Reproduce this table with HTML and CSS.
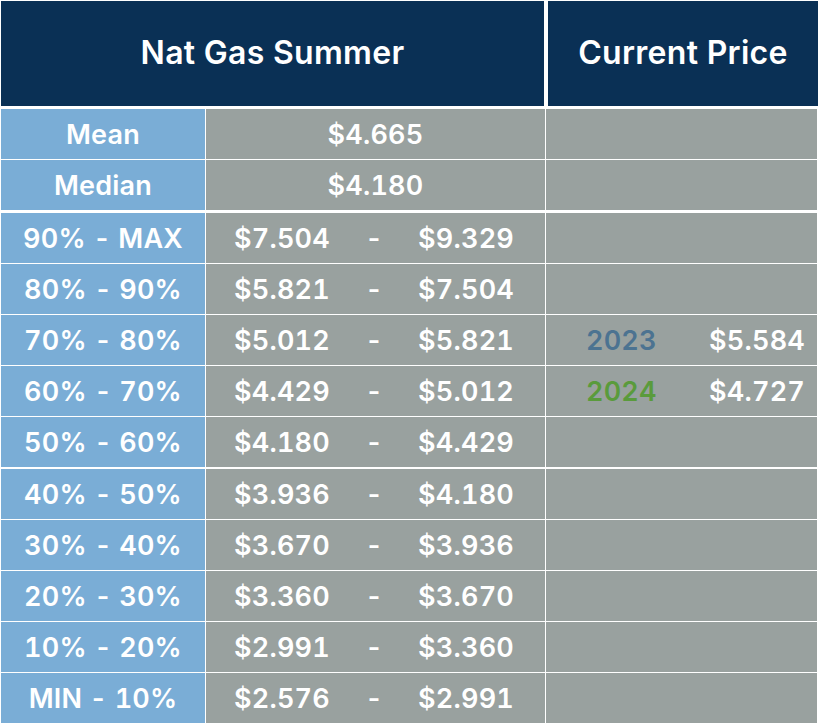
FILE: index.html
```html
<!DOCTYPE html>
<html>
<head>
<meta charset="utf-8">
<link rel="stylesheet" href="styles.css">
</head>
<body>
<div class="sheet">
  <div class="head">
    <div class="h-main">Nat Gas Summer</div>
    <div class="h-cur">Current Price</div>
  </div>
  <div class="rows">
    <div class="row"><div class="lab">Mean</div><div class="val single">$4.665</div><div class="cur"></div></div>
    <div class="row"><div class="lab">Median</div><div class="val single">$4.180</div><div class="cur"></div></div>
    <div class="row sep3"><div class="lab">90% - MAX</div><div class="val"><span class="lo">$7.504</span><span class="dash">-</span><span class="hi">$9.329</span></div><div class="cur"></div></div>
    <div class="row"><div class="lab">80% - 90%</div><div class="val"><span class="lo">$5.821</span><span class="dash">-</span><span class="hi">$7.504</span></div><div class="cur"></div></div>
    <div class="row"><div class="lab">70% - 80%</div><div class="val"><span class="lo">$5.012</span><span class="dash">-</span><span class="hi">$5.821</span></div><div class="cur"><span class="y2023">2023</span><span>$5.584</span></div></div>
    <div class="row"><div class="lab">60% - 70%</div><div class="val"><span class="lo">$4.429</span><span class="dash">-</span><span class="hi">$5.012</span></div><div class="cur"><span class="y2024">2024</span><span>$4.727</span></div></div>
    <div class="row"><div class="lab">50% - 60%</div><div class="val"><span class="lo">$4.180</span><span class="dash">-</span><span class="hi">$4.429</span></div><div class="cur"></div></div>
    <div class="row sep2"><div class="lab">40% - 50%</div><div class="val"><span class="lo">$3.936</span><span class="dash">-</span><span class="hi">$4.180</span></div><div class="cur"></div></div>
    <div class="row"><div class="lab">30% - 40%</div><div class="val"><span class="lo">$3.670</span><span class="dash">-</span><span class="hi">$3.936</span></div><div class="cur"></div></div>
    <div class="row"><div class="lab">20% - 30%</div><div class="val"><span class="lo">$3.360</span><span class="dash">-</span><span class="hi">$3.670</span></div><div class="cur"></div></div>
    <div class="row"><div class="lab">10% - 20%</div><div class="val"><span class="lo">$2.991</span><span class="dash">-</span><span class="hi">$3.360</span></div><div class="cur"></div></div>
    <div class="row"><div class="lab">MIN - 10%</div><div class="val"><span class="lo">$2.576</span><span class="dash">-</span><span class="hi">$2.991</span></div><div class="cur"></div></div>
  </div>
</div>
</body>
</html>
```
FILE: styles.css
```css
html, body {
  margin: 0;
  padding: 0;
  background: #ffffff;
}
body {
  font-family: Inter, "Open Sans", sans-serif;
  font-weight: 600;
  color: #ffffff;
}
.sheet {
  width: 818px;
  padding: 1px 0 0 1px;
}
.head {
  display: flex;
  gap: 4px;
  height: 105px;
}
.h-main, .h-cur {
  background: #0a3055;
  display: flex;
  align-items: center;
  justify-content: center;
  font-size: 32px;
  letter-spacing: 0.3px;
  padding-bottom: 2px;
  box-sizing: border-box;
}
.h-main { width: 543px; }
.h-cur { width: 270px; }
.rows {
  margin-top: 3px;
  display: flex;
  flex-direction: column;
  gap: 1px;
}
.row {
  display: grid;
  grid-template-columns: 204px 339px 271px;
  column-gap: 1px;
  height: 50px;
  font-size: 27px;
  letter-spacing: 0.2px;
  font-variant-numeric: tabular-nums;
}
.row.sep3 { margin-top: 2px; }
.row.sep2 { margin-top: 1px; }
.lab {
  background: #7aadd6;
  display: flex;
  align-items: center;
  justify-content: center;
}
.val {
  background: #99a19f;
  display: grid;
  grid-template-columns: 1fr auto 1fr;
  align-items: center;
  padding: 0 31px 0 28px;
}
.val .lo { justify-self: start; }
.val .hi { justify-self: end; }
.val.single {
  display: flex;
  justify-content: center;
  padding: 0;
}
.cur {
  background: #99a19f;
  display: flex;
  align-items: center;
  justify-content: space-between;
  padding: 0 12px 0 40px;
}
.y2023 { color: #4c7391; }
.y2024 { color: #5a9b3c; }
```
